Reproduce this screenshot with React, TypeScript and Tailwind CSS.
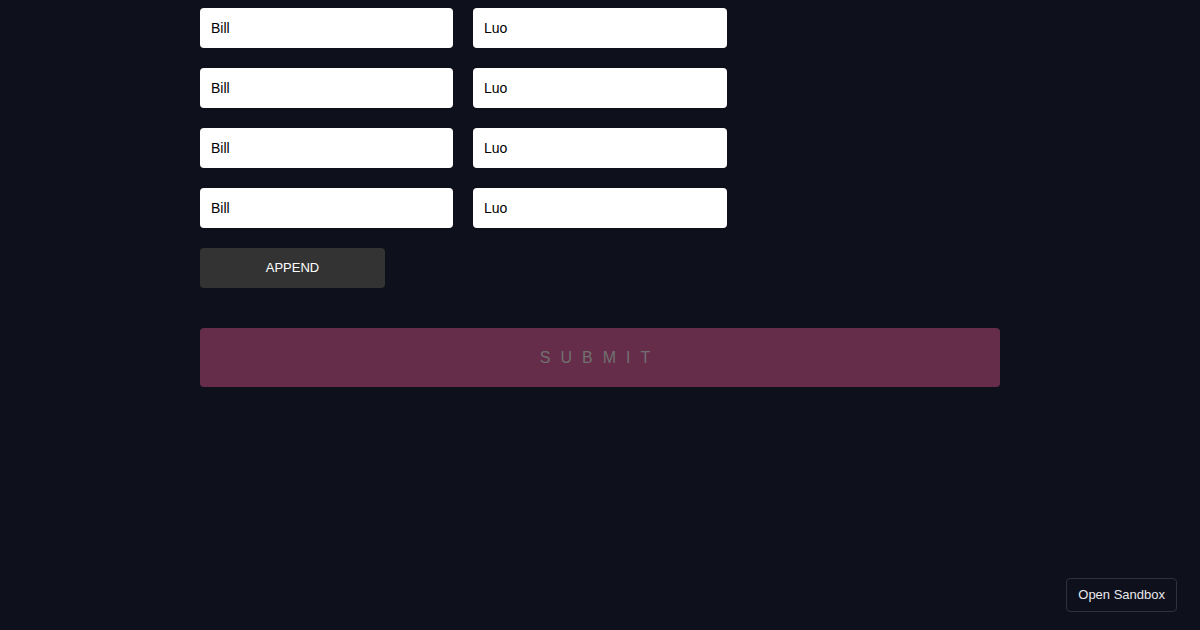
import { useState } from "react";

interface Person {
  firstName: string;
  lastName: string;
}

const initialPeople: Person[] = [
  { firstName: "Bill", lastName: "Luo" },
  { firstName: "Bill", lastName: "Luo" },
  { firstName: "Bill", lastName: "Luo" },
  { firstName: "Bill", lastName: "Luo" },
];

export default function App() {
  const [people, setPeople] = useState<Person[]>(initialPeople);

  const update = (index: number, key: keyof Person, value: string) => {
    setPeople(people.map((p, i) => (i === index ? { ...p, [key]: value } : p)));
  };

  return (
    <div className="min-h-[630px] w-full bg-[#0e101c] font-['Liberation_Sans',Arial,sans-serif] relative">
      <form className="w-[800px] mx-auto pt-2" onSubmit={(e) => e.preventDefault()}>
        <ul className="flex flex-col gap-5">
          {people.map((person, index) => (
            <li key={index} className="flex gap-5">
              <input
                value={person.firstName}
                onChange={(e) => update(index, "firstName", e.target.value)}
                className="w-[253px] h-10 rounded bg-white px-[11px] text-[14px] text-black outline-none"
              />
              <input
                value={person.lastName}
                onChange={(e) => update(index, "lastName", e.target.value)}
                className="w-[254px] h-10 rounded bg-white px-[11px] text-[14px] text-black outline-none"
              />
            </li>
          ))}
        </ul>

        <button
          type="button"
          onClick={() => setPeople([...people, { firstName: "Bill", lastName: "Luo" }])}
          className="mt-5 w-[185px] h-10 rounded bg-[#333333] text-white text-[13px] uppercase"
        >
          append
        </button>

        <button
          type="submit"
          disabled
          className="mt-10 w-full h-[59px] rounded bg-[#662d4b] text-[#707070] text-[16px] font-thin uppercase tracking-[10px]"
        >
          submit
        </button>
      </form>

      <button className="absolute right-[23px] bottom-[18px] h-[34px] px-[11px] rounded border border-[#2f3140] text-[13px] text-[#e8e8ee] bg-[#0e101c]">
        Open Sandbox
      </button>
    </div>
  );
}
